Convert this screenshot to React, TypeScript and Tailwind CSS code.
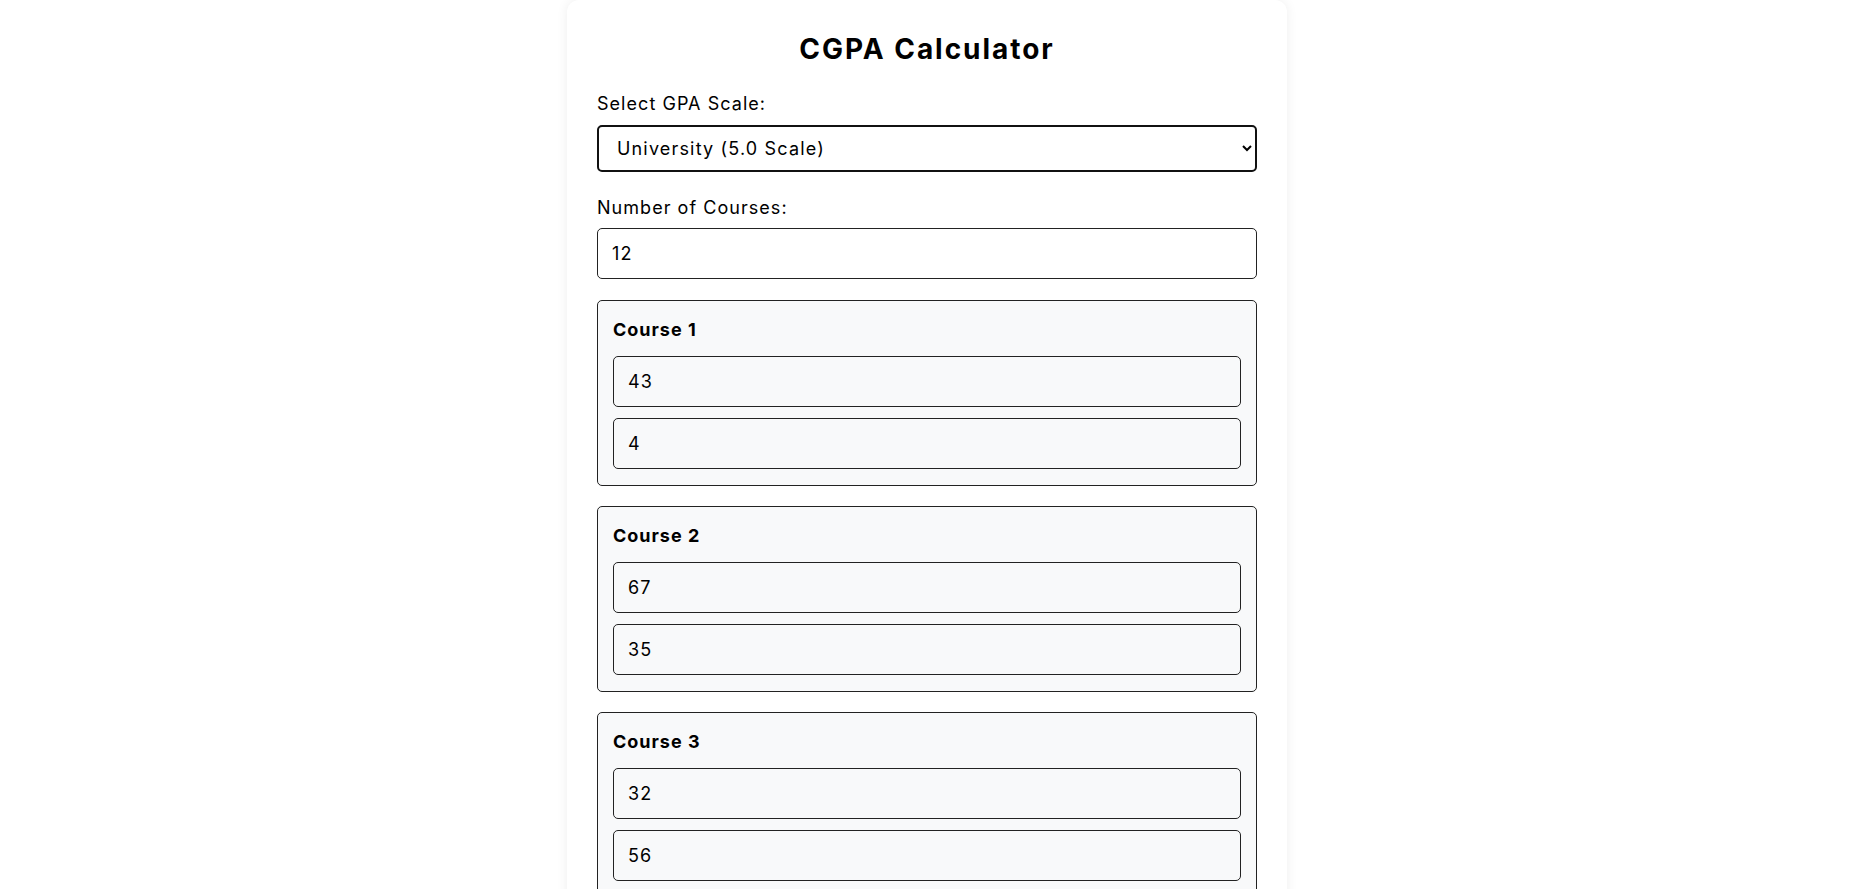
import { useState } from "react";

const initialCourses = [
  { score: "43", units: "4" },
  { score: "67", units: "35" },
  { score: "32", units: "56" },
  { score: "", units: "" },
  { score: "", units: "" },
  { score: "", units: "" },
  { score: "", units: "" },
  { score: "", units: "" },
  { score: "", units: "" },
  { score: "", units: "" },
  { score: "", units: "" },
  { score: "", units: "" },
];

const App = () => {
  const [scale, setScale] = useState("5");
  const [count, setCount] = useState("12");
  const [courses, setCourses] = useState(initialCourses);

  const update = (i: number, key: "score" | "units", value: string) => {
    setCourses((prev) => prev.map((c, idx) => (idx === i ? { ...c, [key]: value } : c)));
  };

  return (
    <div className="min-h-screen bg-white font-['Inter',sans-serif] tracking-[0.065em] text-black">
      <div className="mx-auto w-[720px] rounded-xl bg-white px-[30px] pt-[31px] pb-8 shadow-[0_0_12px_rgba(0,0,0,0.07)]">
        <h1 className="mb-[25px] text-center text-[28px] font-bold leading-9 tracking-[0.07em]">CGPA Calculator</h1>

        {/* Scale */}
        <label className="mb-[9px] block text-[18px] leading-6">Select GPA Scale:</label>
        <select
          value={scale}
          onChange={(e) => setScale(e.target.value)}
          className="mb-[24px] block h-[47px] w-full rounded-[5px] border-2 border-[#111] bg-white px-[14px] text-[18px] tracking-[0.065em] text-black outline-none"
        >
          <option value="5">University (5.0 Scale)</option>
          <option value="4">University (4.0 Scale)</option>
        </select>

        {/* Course count */}
        <label className="mb-2 block text-[18px] leading-6">Number of Courses:</label>
        <input
          type="number"
          value={count}
          onChange={(e) => setCount(e.target.value)}
          className="mb-[21px] block h-[51px] w-full rounded-[5px] border border-[#222] bg-white px-[14px] text-[18px] tracking-[0.065em] outline-none"
        />

        <div className="flex flex-col gap-5">
          {courses.map((c, i) => (
            <div key={i} className="rounded-[5px] border border-[#222] bg-[#f8f9fa] px-[15px] pt-[15px] pb-4">
              <h3 className="mb-3 text-[18px] font-bold leading-7 tracking-[0.055em]">Course {i + 1}</h3>
              <div className="flex flex-col gap-[11px]">
                <input
                  type="number"
                  value={c.score}
                  onChange={(e) => update(i, "score", e.target.value)}
                  className="block h-[51px] w-full rounded-[5px] border border-[#222] bg-[#f8f9fa] px-[14px] text-[18px] tracking-[0.065em] outline-none"
                />
                <input
                  type="number"
                  value={c.units}
                  onChange={(e) => update(i, "units", e.target.value)}
                  className="block h-[51px] w-full rounded-[5px] border border-[#222] bg-[#f8f9fa] px-[14px] text-[18px] tracking-[0.065em] outline-none"
                />
              </div>
            </div>
          ))}
        </div>
      </div>
    </div>
  );
};

export default App;
